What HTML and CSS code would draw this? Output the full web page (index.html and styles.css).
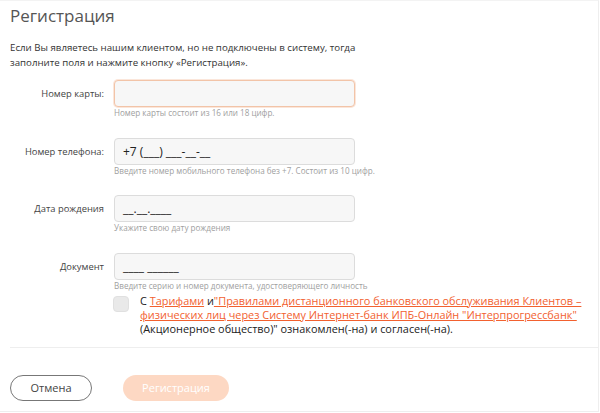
FILE: index.html
```html
<!DOCTYPE html>
<html lang="ru">
<head>
<meta charset="utf-8">
<link rel="stylesheet" href="styles.css">
</head>
<body>
<div class="modal">
  <h1 class="title">Регистрация</h1>
  <p class="intro">Если Вы являетесь нашим клиентом, но не подключены в систему, тогда<br>заполните поля и нажмите кнопку «Регистрация».</p>
  <div class="form">
    <div class="field">
      <label class="label">Номер карты:</label>
      <div class="control">
        <div class="input input-active"></div>
        <div class="hint">Номер карты состоит из 16 или 18 цифр.</div>
      </div>
    </div>
    <div class="field">
      <label class="label">Номер телефона:</label>
      <div class="control">
        <div class="input">+7 (___) ___-__-__</div>
        <div class="hint">Введите номер мобильного телефона без +7. Состоит из 10 цифр.</div>
      </div>
    </div>
    <div class="field">
      <label class="label">Дата рождения</label>
      <div class="control">
        <div class="input">__.__.____</div>
        <div class="hint">Укажите свою дату рождения</div>
      </div>
    </div>
    <div class="field field-last">
      <label class="label">Документ</label>
      <div class="control">
        <div class="input">____ ______</div>
        <div class="hint">Введите серию и номер документа, удостоверяющего личность</div>
      </div>
    </div>
    <div class="agree">
      <span class="checkbox"></span>
      <p class="agree-text">С <a class="link" href="#">Тарифами</a> и<a class="link" href="#">"Правилами дистанционного банковского обслуживания Клиентов – физических лиц через Систему Интернет-банк ИПБ-Онлайн "Интерпрогрессбанк"</a> (Акционерное общество)" ознакомлен(-на) и согласен(-на).</p>
    </div>
  </div>
  <div class="divider"></div>
  <div class="actions">
    <button class="btn btn-cancel">Отмена</button>
    <button class="btn btn-submit">Регистрация</button>
  </div>
</div>
</body>
</html>
```
FILE: styles.css
```css
* { box-sizing: border-box; }
html, body { margin: 0; padding: 0; background: #fff; }
body {
  font-family: "Open Sans", "Liberation Sans", sans-serif;
  color: #333;
}
.modal {
  width: 599px;
  height: 412px;
  border-top: 1px solid #f3f3f3;
  border-right: 1px solid #eeeeee;
  border-bottom: 1px solid #eeeeee;
  padding: 0 0 0 10px;
}
.title {
  margin: 0;
  padding-top: 3px;
  font-size: 17px;
  font-weight: 400;
  line-height: 24px;
  color: #555;
}
.intro {
  margin: 11.5px 0 0;
  font-size: 9.7px;
  line-height: 15px;
  color: #333;
}
.form {
  margin-top: 10.5px;
}
.field {
  display: grid;
  grid-template-columns: 94px 241px;
  column-gap: 10px;
  height: 57.5px;
}
.field-last {
  height: auto;
}
.label {
  text-align: right;
  font-size: 9.4px;
  line-height: 27px;
  color: #444;
}
.input {
  height: 27px;
  border: 1px solid #dcdcdc;
  border-radius: 4px;
  background: #f7f7f7;
  font-size: 12px;
  line-height: 25px;
  padding-left: 8px;
  color: #222;
}
.input-active {
  border-color: #f2c4a8;
  box-shadow: 0 0 0 1px #fbe6da;
}
.hint {
  font-size: 8.1px;
  line-height: 11px;
  color: #a0a0a0;
  white-space: nowrap;
}
.agree {
  display: flex;
  align-items: flex-start;
  gap: 11px;
  margin-left: 103px;
  margin-top: 3px;
}
.checkbox {
  flex: none;
  width: 16px;
  height: 16px;
  border-radius: 4px;
  background: #e9e9e9;
  border: 1px solid #e0e0e0;
  margin-top: 2px;
}
.agree-text {
  margin: 0;
  font-size: 10.9px;
  line-height: 14px;
  color: #222;
  width: 452px;
}
.link {
  color: #f2612f;
  text-decoration: underline;
}
.divider {
  height: 1px;
  background: #eeeeee;
  margin-top: 11px;
}
.actions {
  display: flex;
  gap: 31px;
  margin-top: 27px;
}
.btn {
  font-family: "Open Sans", "Liberation Sans", sans-serif;
  font-size: 11px;
  height: 26px;
  border-radius: 13px;
  padding: 0;
  cursor: pointer;
}
.btn-cancel {
  width: 82px;
  background: #fff;
  border: 1px solid #777;
  color: #444;
}
.btn-submit {
  width: 106px;
  background: #fdd8c3;
  border: none;
  color: #fff;
}
```
